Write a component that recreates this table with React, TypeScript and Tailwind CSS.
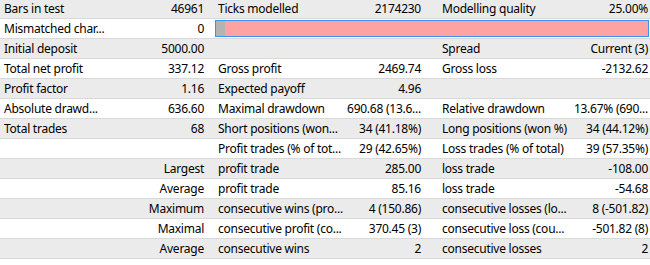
type Cell = string;

// label1, value1, label2, value2, label3, value3
const rows: Cell[][] = [
	["Bars in test", "46961", "Ticks modelled", "2174230", "Modelling quality", "25.00%"],
	["Mismatched char...", "0", "", "", "", ""],
	["Initial deposit", "5000.00", "", "", "Spread", "Current (3)"],
	["Total net profit", "337.12", "Gross profit", "2469.74", "Gross loss", "-2132.62"],
	["Profit factor", "1.16", "Expected payoff", "4.96", "", ""],
	["Absolute drawd...", "636.60", "Maximal drawdown", "690.68 (13.6...", "Relative drawdown", "13.67% (690..."],
	["Total trades", "68", "Short positions (won...", "34 (41.18%)", "Long positions (won %)", "34 (44.12%)"],
	["", "", "Profit trades (% of tot...", "29 (42.65%)", "Loss trades (% of total)", "39 (57.35%)"],
	["", "Largest", "profit trade", "285.00", "loss trade", "-108.00"],
	["", "Average", "profit trade", "85.16", "loss trade", "-54.68"],
	["", "Maximum", "consecutive wins (pro...", "4 (150.86)", "consecutive losses (lo...", "8 (-501.82)"],
	["", "Maximal", "consecutive profit (co...", "370.45 (3)", "consecutive loss (cou...", "-501.82 (8)"],
	["", "Average", "consecutive wins", "2", "consecutive losses", "2"]
];

function QualityBar() {
	return (
		<div className="flex-1 h-full flex items-center pl-[5px] pr-px">
			<div className="w-full h-[17px] border border-[#3d94ee] flex">
				<div className="w-[9px] h-full bg-[#b3b3b3]" />
				<div className="flex-1 h-full bg-[#ffa2a2]" />
			</div>
		</div>
	);
}

export default function App() {
	return (
		<div
			className="w-[650px] h-[265px] bg-white overflow-hidden text-[12px] tracking-[-0.25px] text-black"
			style={{ fontFamily: '"Noto Sans", "Open Sans", sans-serif' }}
		>
			<div className="-mt-px">
				{rows.map((r, i) => (
					<div
						key={i}
						className={
							"flex h-5 border-b border-[#d9d9d9] items-center leading-none " +
							(i % 2 === 0 ? "bg-[#ebebeb]" : "bg-white")
						}
					>
						<div className="w-[110px] pl-[4px] whitespace-nowrap">{r[0]}</div>
						<div className="w-[100px] pr-[6px] text-right whitespace-nowrap">{r[1]}</div>
						{i === 1 ? (
							<QualityBar />
						) : (
							<>
								<div className="w-[135px] pl-[8px] whitespace-nowrap">{r[2]}</div>
								<div className="w-[83px] pr-[7px] text-right whitespace-nowrap">{r[3]}</div>
								<div className="w-[144px] pl-[14px] whitespace-nowrap">{r[4]}</div>
								<div className="w-[78px] pr-[2px] text-right whitespace-nowrap">{r[5]}</div>
							</>
						)}
					</div>
				))}
			</div>
		</div>
	);
}
